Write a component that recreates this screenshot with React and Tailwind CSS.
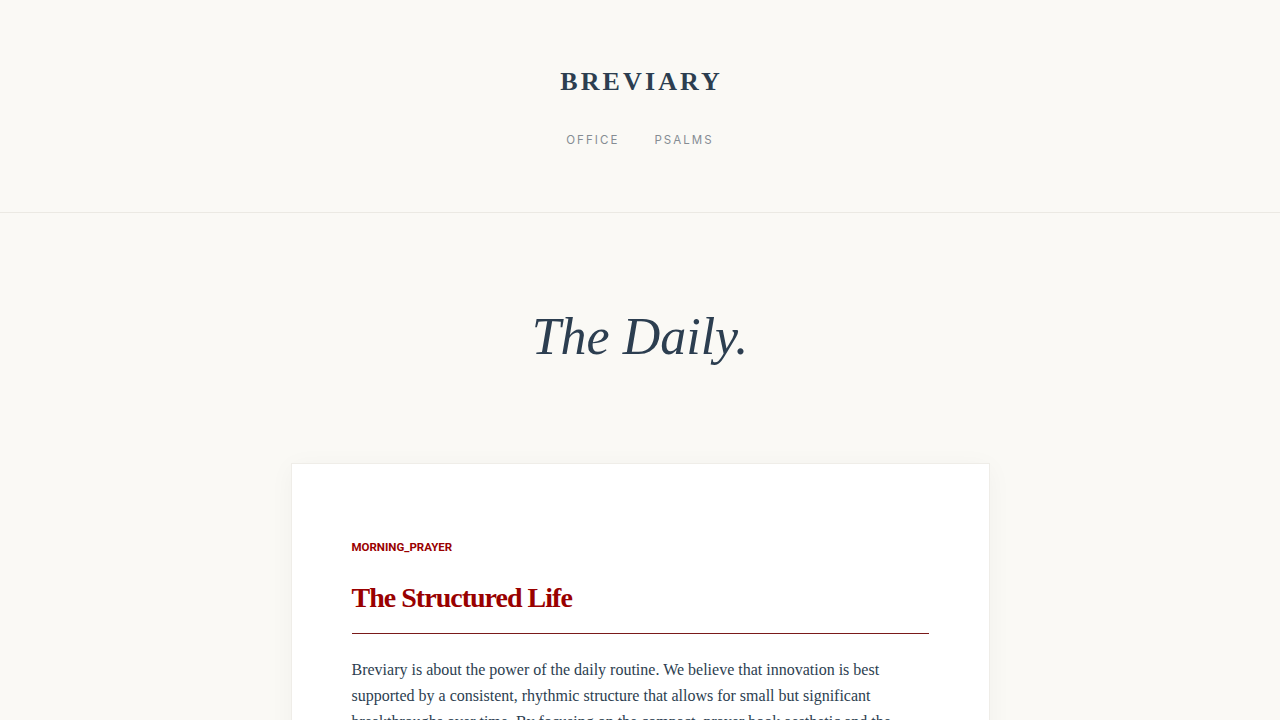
import React from 'react';

const serif = { fontFamily: '"Liberation Serif", "DejaVu Serif", serif' };

export default function App() {
    return (
        <div className="min-h-screen bg-[#faf9f5] text-[#2c3e50]">
            {/* Header */}
            <header className="border-b border-[#ebe9e3] pt-[67px] pb-[65px] flex flex-col items-center">
                <h1 className="font-['Liberation_Serif',serif] font-bold text-[26px] leading-[30px] tracking-[0.12em] pl-[0.12em] text-[#2c3e50]">
                    BREVIARY
                </h1>
                <nav className="mt-[36px] flex gap-[35px] font-['Inter',sans-serif] text-[11.5px] leading-[14px] tracking-[0.18em] text-[#858c93]">
                    <a href="#">OFFICE</a>
                    <a href="#">PSALMS</a>
                </nav>
            </header>

            {/* Hero */}
            <section className="pt-[94px] pb-[96px] flex justify-center">
                <h2 className="font-['Liberation_Serif',serif] italic text-[52px] leading-[60px] text-[#2c3e50]">
                    The Daily.
                </h2>
            </section>

            {/* Card */}
            <main className="flex justify-center pb-20">
                <article className="w-[699px] bg-white border border-[#efede8] shadow-[0_4px_24px_rgba(0,0,0,0.04)] px-[60px] pt-[76px] pb-16">
                    <div className="font-['Roboto',sans-serif] font-bold text-[11.5px] leading-[14px] text-[#990000]">
                        MORNING_PRAYER
                    </div>
                    <h3 className="mt-[27px] font-['Liberation_Serif',serif] font-bold text-[28px] leading-[34px] tracking-[-0.035em] text-[#990000] pb-[18px] border-b border-[#7a1a1a]">
                        The Structured Life
                    </h3>
                    <p className="mt-[23px] text-[16px] leading-[26px] text-[#2c3e50]" style={serif}>
                        Breviary is about the power of the daily routine. We believe that innovation is best
                        supported by a consistent, rhythmic structure that allows for small but significant
                        breakthroughs over time. By focusing on the compact, prayer book aesthetic and the
                        discipline of daily practice, we make room for the work that matters most.
                    </p>
                </article>
            </main>
        </div>
    );
}
